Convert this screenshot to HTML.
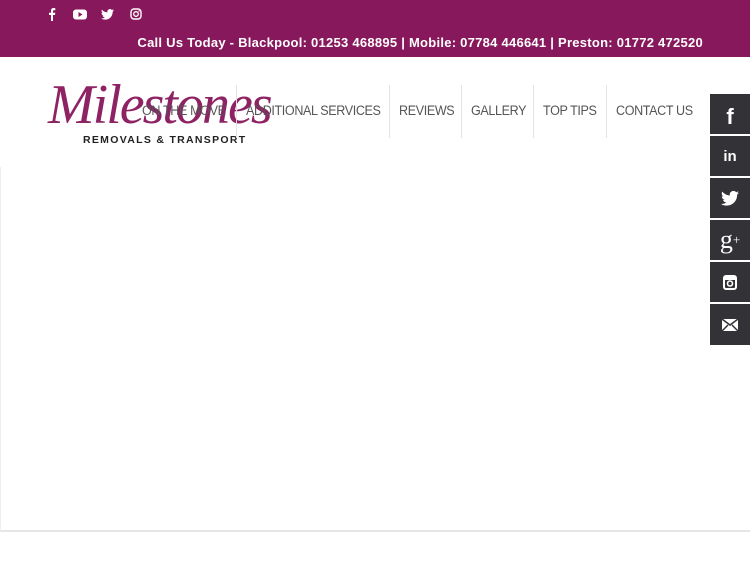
<!DOCTYPE html>
<html><head><meta charset="utf-8"><style>
*{margin:0;padding:0;box-sizing:border-box}
body{width:750px;height:563px;background:#fff;position:relative;overflow:hidden;font-family:"Liberation Sans",sans-serif}
.top{position:absolute;left:0;top:0;width:750px;height:57px;background:#88185c}
.call{position:absolute;right:47px;top:35px;color:#fff;font-weight:bold;font-size:13px;white-space:nowrap;letter-spacing:0.26px}
.si{position:absolute;top:8px}
.nav{position:absolute;top:103px;font-size:13.5px;color:#555;letter-spacing:-0.4px;white-space:nowrap;transform:scaleX(0.93);transform-origin:0 0}
.sep{position:absolute;top:85px;width:1px;height:53px;background:#e3e3e3}
.logo{position:absolute;left:48px;top:75px;font-family:"Liberation Serif",serif;font-style:italic;font-size:56px;color:#88185c;letter-spacing:-2px;line-height:60px;opacity:.95}
.sub{position:absolute;left:83px;top:134px;font-size:10.5px;font-weight:bold;letter-spacing:1.3px;color:#222}
.box{position:absolute;left:0;top:167px;width:750px;height:365px;border-left:1px solid #eee;border-bottom:2px solid #e6e6e6}
.sb{position:absolute;left:710px;width:40px;height:40px;background:#323237;color:#fff;display:flex;align-items:center;justify-content:center;font-weight:bold}
</style></head><body>
<div class="top">
<svg class="si" style="left:48px" width="8" height="13" viewBox="0 0 8 13"><path d="M5 13V7h2l.3-2.3H5V3.3c0-.6.2-1 1-1h1.3V.1C7 .1 6.3 0 5.6 0 4 0 3 1 3 2.7v2H1V7h2v6z" fill="#fff"/></svg>
<svg class="si" style="left:73px;top:9px" width="14" height="11" viewBox="0 0 14 11"><rect x="0" y="0.5" width="14" height="10" rx="3" fill="#fff"/><path d="M5.5 3l4 2.5-4 2.5z" fill="#88185c"/></svg>
<svg class="si" style="left:101px;top:9px" width="13" height="11" viewBox="0 0 24 20"><path d="M24 2.4a10 10 0 0 1-2.8.8A5 5 0 0 0 23.3.4a10 10 0 0 1-3.1 1.2A4.9 4.9 0 0 0 11.8 6 14 14 0 0 1 1.7.9a4.9 4.9 0 0 0 1.5 6.6A4.9 4.9 0 0 1 1 6.9a4.9 4.9 0 0 0 3.9 4.8 5 5 0 0 1-2.2.1 4.9 4.9 0 0 0 4.6 3.4A9.9 9.9 0 0 1 0 17.3 14 14 0 0 0 7.5 19.5c9 0 14-7.5 14-14v-.6A10 10 0 0 0 24 2.4z" fill="#fff"/></svg>
<svg class="si" style="left:130px" width="12" height="12" viewBox="0 0 12 12"><rect x="1" y="1" width="10" height="10" rx="3" fill="none" stroke="#fff" stroke-width="1.4"/><circle cx="6" cy="6" r="2.3" fill="none" stroke="#fff" stroke-width="1.3"/><circle cx="9" cy="3" r=".7" fill="#fff"/></svg>
<div class="call">Call Us Today - Blackpool: 01253 468895 | Mobile: 07784 446641 | Preston: 01772 472520</div>
</div>
<div class="logo">Milestones</div>
<div class="sub">REMOVALS &amp; TRANSPORT</div>
<div class="nav" style="left:142px">ON THE MOVE</div>
<div class="sep" style="left:236px"></div>
<div class="nav" style="left:246px">ADDITIONAL SERVICES</div>
<div class="sep" style="left:389px"></div>
<div class="nav" style="left:399px">REVIEWS</div>
<div class="sep" style="left:461px"></div>
<div class="nav" style="left:471px">GALLERY</div>
<div class="sep" style="left:533px"></div>
<div class="nav" style="left:543px">TOP TIPS</div>
<div class="sep" style="left:606px"></div>
<div class="nav" style="left:616px">CONTACT US</div>
<div class="box"></div>
<div class="sb" style="top:94px;font-size:22px;padding-top:6px">f</div>
<div class="sb" style="top:136px;font-size:15px">in</div>
<div class="sb" style="top:178px"><svg width="18" height="15" viewBox="0 0 24 20"><path d="M24 2.4a10 10 0 0 1-2.8.8A5 5 0 0 0 23.3.4a10 10 0 0 1-3.1 1.2A4.9 4.9 0 0 0 11.8 6 14 14 0 0 1 1.7.9a4.9 4.9 0 0 0 1.5 6.6A4.9 4.9 0 0 1 1 6.9a4.9 4.9 0 0 0 3.9 4.8 5 5 0 0 1-2.2.1 4.9 4.9 0 0 0 4.6 3.4A9.9 9.9 0 0 1 0 17.3 14 14 0 0 0 7.5 19.5c9 0 14-7.5 14-14v-.6A10 10 0 0 0 24 2.4z" fill="#fff"/></svg></div>
<div class="sb" style="top:220px;font-family:'Liberation Serif',serif;font-weight:normal;font-size:26px">g<sup style="font-size:13px">+</sup></div>
<div class="sb" style="top:262px"><svg width="14" height="15" viewBox="0 0 14 15"><rect x="1" y="1" width="12" height="13" rx="2" fill="none" stroke="#fff" stroke-width="2"/><rect x="1" y="1" width="12" height="4" fill="#fff"/><circle cx="7" cy="8.5" r="2.5" fill="none" stroke="#fff" stroke-width="1.6"/></svg></div>
<div class="sb" style="top:304px;height:41px"><svg width="16" height="12" viewBox="0 0 16 12"><rect width="16" height="12" fill="#fff"/><path d="M0 0l8 6 8-6M0 12l6-6M16 12l-6-6" stroke="#323237" stroke-width="1.5" fill="none"/></svg></div>
</body></html>
